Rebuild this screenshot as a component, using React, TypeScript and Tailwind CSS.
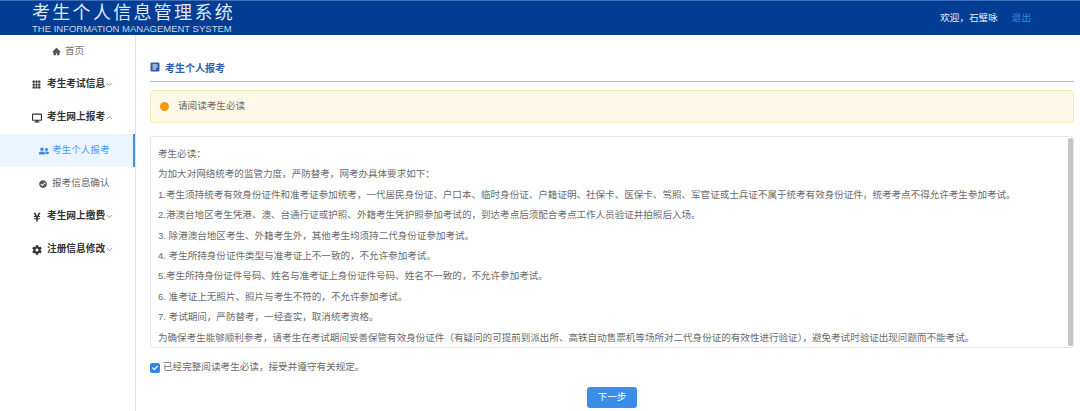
import { ChevronDown, ChevronUp } from "lucide-react";
import { AiFillHome } from "react-icons/ai";
import { BsGrid3X3GapFill } from "react-icons/bs";
import { FaCheck, FaCheckCircle, FaCog, FaDesktop, FaUserFriends, FaYenSign } from "react-icons/fa";
import { MdArticle } from "react-icons/md";
import type { ReactNode } from "react";

const rules = [
  "考生必读：",
  "为加大对网络统考的监管力度，严防替考，网考办具体要求如下：",
  "1.考生须持统考有效身份证件和准考证参加统考，一代居民身份证、户口本、临时身份证、户籍证明、社保卡、医保卡、驾照、军官证或士兵证不属于统考有效身份证件，统考考点不得允许考生参加考试。",
  "2.港澳台地区考生凭港、澳、台通行证或护照、外籍考生凭护照参加考试的，到达考点后须配合考点工作人员验证并拍照后入场。",
  "3. 除港澳台地区考生、外籍考生外，其他考生均须持二代身份证参加考试。",
  "4. 考生所持身份证件类型与准考证上不一致的，不允许参加考试。",
  "5.考生所持身份证件号码、姓名与准考证上身份证件号码、姓名不一致的，不允许参加考试。",
  "6. 准考证上无照片、照片与考生不符的，不允许参加考试。",
  "7. 考试期间，严防替考，一经查实，取消统考资格。",
  "为确保考生能够顺利参考，请考生在考试期间妥善保管有效身份证件（有疑问的可提前到派出所、高铁自动售票机等场所对二代身份证的有效性进行验证），避免考试时验证出现问题而不能考试。",
];

function MenuGroup({ icon, label, open }: { icon: ReactNode; label: string; open?: boolean }) {
  return (
    <div className="flex h-[33px] items-center pl-[32px] text-[9.7px] font-bold text-[#333]">
      <span className="flex w-[15px] shrink-0 items-center">{icon}</span>
      <span>{label}</span>
      {open ? <ChevronUp size={9} className="text-[#777]" /> : <ChevronDown size={9} className="text-[#777]" />}
    </div>
  );
}

export default function App() {
  return (
    <div className="flex h-[411px] w-[1080px] flex-col overflow-hidden bg-white font-['Liberation_Sans','Noto_Sans_CJK_SC',sans-serif] text-[#606266]">
      {/* header */}
      <header className="flex h-[35px] shrink-0 items-center justify-between border-t border-[#3a6db5] bg-[#033d93] pl-[32px] pr-[49px] text-white">
        <div className="flex flex-col">
          <div className="pt-[1px] text-[18px] leading-[21px] tracking-[2.3px] text-[#dfe8f5]">考生个人信息管理系统</div>
          <div className="text-[9.5px] leading-[10px] text-[#c9d6ea]">THE INFORMATION MANAGEMENT SYSTEM</div>
        </div>
        <div className="flex items-center gap-[14px] text-[9.6px]">
          <span className="text-[#e8eef8]">欢迎，石璧咏</span>
          <span className="text-[#2f86e8]">退出</span>
        </div>
      </header>

      <div className="flex min-h-0 flex-1">
        {/* sidebar */}
        <aside className="w-[136px] shrink-0 border-r border-[#dfe3ea]">
          <div className="flex h-[33px] items-center pl-[52px] text-[9.6px] text-[#777]">
            <AiFillHome size={9} className="mr-[4px] text-[#555]" />
            首页
          </div>
          <MenuGroup icon={<BsGrid3X3GapFill size={9} />} label="考生考试信息" />
          <MenuGroup icon={<FaDesktop size={10} />} label="考生网上报考" open />
          <div className="flex h-[33px] items-center border-r-2 border-[#4a8fdc] bg-[#ecf5ff] pl-[39px] text-[9.6px] text-[#409eff]">
            <FaUserFriends size={10} className="mr-[3px] text-[#3b8be0]" />
            考生个人报考
          </div>
          <div className="flex h-[33px] items-center pl-[39px] text-[9.6px] text-[#666]">
            <FaCheckCircle size={8} className="mr-[5px] text-[#555]" />
            报考信息确认
          </div>
          <MenuGroup icon={<FaYenSign size={10} />} label="考生网上缴费" />
          <MenuGroup icon={<FaCog size={10} />} label="注册信息修改" />
        </aside>

        {/* main */}
        <main className="min-w-0 flex-1 pl-[14px] pr-[6px] pt-[24px]">
          <div className="flex h-[23px] items-start border-b border-[#a3bfe6] pt-[2px] text-[10px] font-bold text-[#2f5fa8]">
            <MdArticle size={12} className="-ml-[1px] mr-[4px] text-[#2f5fa8]" />
            考生个人报考
          </div>

          <div className="mt-[8px] flex h-[33px] items-center rounded-[3px] border border-[#f8e8bd] bg-[#fff8e6] pl-[9px] text-[9.6px] text-[#6b6b6b]">
            <span className="mr-[9px] h-[9px] w-[9px] rounded-full bg-[#f59a13]" />
            请阅读考生必读
          </div>

          <div className="mt-[13px] flex h-[212px] rounded-[3px] border border-[#e4e7ed]">
            <div className="min-w-0 flex-1 pl-[7px] pt-[7px] text-[9.55px] leading-[20.4px] text-[#6b6b6b]">
              {rules.map((line) => (
                <p key={line} className="whitespace-nowrap">
                  {line}
                </p>
              ))}
            </div>
            <div className="my-[1px] w-[5px] shrink-0 rounded-[2px] bg-[#c4c4c4]" />
          </div>

          <label className="mt-[14px] flex h-[11px] items-center text-[9.6px] text-[#6b6b6b]">
            <span className="mr-[3px] flex h-[10px] w-[10px] items-center justify-center rounded-[2px] bg-[#2f86e8]">
              <FaCheck size={6} className="text-white" />
            </span>
            已经完整阅读考生必读，接受并遵守有关规定。
          </label>

          <div className="mt-[14px] flex justify-center">
            <button className="h-[21px] w-[50px] rounded-[3px] bg-[#3b8ee8] text-[9.6px] text-white">下一步</button>
          </div>
        </main>
      </div>
    </div>
  );
}
